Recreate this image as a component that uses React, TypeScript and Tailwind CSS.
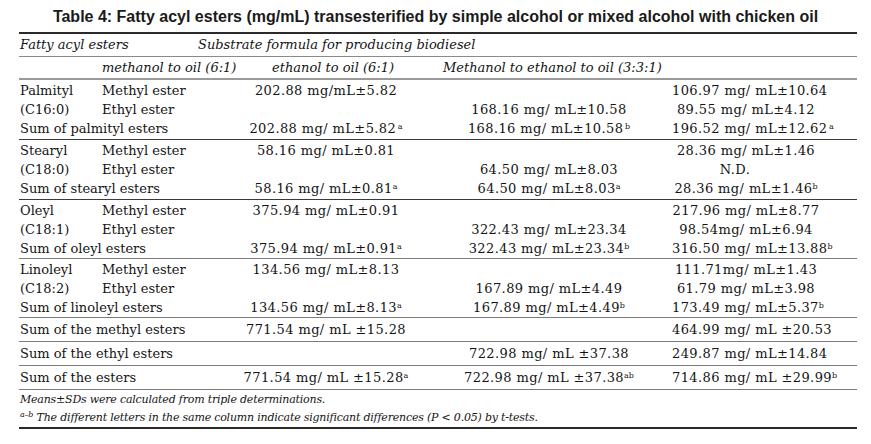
import React from 'react';

type Cell = { v: string; s?: string; gap?: boolean; cls?: string };

const GROUPS: {
  name: string;
  code: string;
  methyl: Cell[];
  ethyl: Cell[];
  sum: Cell[];
  line: string;
  pad: string;
}[] = [
  {
    name: 'Palmityl',
    code: '(C16:0)',
    methyl: [{ v: '202.88 mg/mL±5.82' }, { v: '' }, { v: '106.97 mg/ mL±10.64' }],
    ethyl: [{ v: '' }, { v: '168.16 mg/ mL±10.58' }, { v: '89.55 mg/ mL±4.12' }],
    sum: [
      { v: '202.88 mg/ mL±5.82', s: 'a', gap: true },
      { v: '168.16 mg/ mL±10.58', s: 'b', gap: true },
      { v: '196.52 mg/ mL±12.62', s: 'a', gap: true },
    ],
    line: 'bg-[#3a3a3a]',
    pad: 'pt-px pb-px',
  },
  {
    name: 'Stearyl',
    code: '(C18:0)',
    methyl: [{ v: '58.16 mg/ mL±0.81' }, { v: '' }, { v: '28.36 mg/ mL±1.46' }],
    ethyl: [{ v: '' }, { v: '64.50 mg/ mL±8.03' }, { v: 'N.D.', cls: 'pr-[22px]' }],
    sum: [
      { v: '58.16 mg/ mL±0.81', s: 'a' },
      { v: '64.50 mg/ mL±8.03', s: 'a' },
      { v: '28.36 mg/ mL±1.46', s: 'b' },
    ],
    line: 'bg-[#3a3a3a]',
    pad: 'pt-px pb-px',
  },
  {
    name: 'Oleyl',
    code: '(C18:1)',
    methyl: [{ v: '375.94 mg/ mL±0.91' }, { v: '' }, { v: '217.96 mg/ mL±8.77' }],
    ethyl: [{ v: '' }, { v: '322.43 mg/ mL±23.34' }, { v: '98.54mg/ mL±6.94' }],
    sum: [
      { v: '375.94 mg/ mL±0.91', s: 'a' },
      { v: '322.43 mg/ mL±23.34', s: 'b' },
      { v: '316.50 mg/ mL±13.88', s: 'b' },
    ],
    line: 'bg-[#7a7a7a]',
    pad: 'pt-px',
  },
  {
    name: 'Linoleyl',
    code: '(C18:2)',
    methyl: [{ v: '134.56 mg/ mL±8.13' }, { v: '' }, { v: '111.71mg/ mL±1.43' }],
    ethyl: [{ v: '' }, { v: '167.89 mg/ mL±4.49' }, { v: '61.79 mg/ mL±3.98' }],
    sum: [
      { v: '134.56 mg/ mL±8.13', s: 'a' },
      { v: '167.89 mg/ mL±4.49', s: 'b' },
      { v: '173.49 mg/ mL±5.37', s: 'b' },
    ],
    line: 'bg-[#7a7a7a]',
    pad: 'pt-px',
  },
];

const TOTALS: { label: string; cells: Cell[] }[] = [
  {
    label: 'Sum of the methyl esters',
    cells: [{ v: '771.54 mg/ mL ±15.28' }, { v: '' }, { v: '464.99 mg/ mL ±20.53' }],
  },
  {
    label: 'Sum of the ethyl esters',
    cells: [{ v: '' }, { v: '722.98 mg/ mL ±37.38' }, { v: '249.87 mg/ mL±14.84' }],
  },
  {
    label: 'Sum of the esters',
    cells: [
      { v: '771.54 mg/ mL ±15.28', s: 'a' },
      { v: '722.98 mg/ mL ±37.38', s: 'ab' },
      { v: '714.86 mg/ mL ±29.99', s: 'b' },
    ],
  },
];

const Value: React.FC<{ cell: Cell }> = ({ cell }) => (
  <div className={`text-center whitespace-nowrap tracking-[0.4px] ${cell.cls ?? ''}`}>
    {cell.v}
    {cell.s && (
      <sup className="text-[8px] tracking-normal">
        {cell.gap ? '\u2009' : ''}
        {cell.s}
      </sup>
    )}
  </div>
);

const Row: React.FC<{ children: React.ReactNode; h?: string }> = ({ children, h = 'h-[19px]' }) => (
  <div className={`grid grid-cols-[83px_124px_200px_246px_148px] items-center ${h}`}>{children}</div>
);

export default function App() {
  return (
    <div className="w-[871px] h-[444px] bg-white text-[#141414] font-['DejaVu_Serif',serif] text-[13px] overflow-hidden">
      {/* Title */}
      <div className="h-[32px] flex items-center justify-center pt-[2px] font-['Liberation_Sans',Arial,sans-serif] font-bold text-[16px] text-[#1a1a1a]">
        Table 4: Fatty acyl esters (mg/mL) transesterified by simple alcohol or mixed alcohol with chicken oil
      </div>

      <div className="ml-[19px] w-[838px]">
        <div className="h-[2px] bg-[#2a2a2a]" />

        {/* Header rows */}
        <div className="flex items-center h-[22px] italic">
          <div className="w-[179px] pl-[1px]">Fatty acyl esters</div>
          <div>Substrate formula for producing biodiesel</div>
        </div>
        <div className="h-px bg-[#8a8a8a]" />
        <div className="flex items-center h-[21px] italic">
          <div className="w-[253px] pl-[83px]">methanol to oil (6:1)</div>
          <div className="w-[171px]">ethanol to oil (6:1)</div>
          <div>Methanol to ethanol to oil (3:3:1)</div>
        </div>
        <div className="h-[2px] bg-[#9a9a9a]" />

        {/* Fatty acid groups */}
        {GROUPS.map((g) => (
          <div key={g.name}>
            <div className={g.pad}>
              <Row>
                <div className="pl-[1px]">{g.name}</div>
                <div>Methyl ester</div>
                {g.methyl.map((c, i) => (
                  <Value key={i} cell={c} />
                ))}
              </Row>
              <Row>
                <div className="pl-[1px]">{g.code}</div>
                <div>Ethyl ester</div>
                {g.ethyl.map((c, i) => (
                  <Value key={i} cell={c} />
                ))}
              </Row>
              <Row>
                <div className="col-span-2 pl-[1px]">Sum of {g.name.toLowerCase()} esters</div>
                {g.sum.map((c, i) => (
                  <Value key={i} cell={c} />
                ))}
              </Row>
            </div>
            <div className={`h-px ${g.line}`} />
          </div>
        ))}

        {/* Totals */}
        {TOTALS.map((t) => (
          <div key={t.label}>
            <Row h="h-[23px]">
              <div className="col-span-2 pl-[1px]">{t.label}</div>
              {t.cells.map((c, i) => (
                <Value key={i} cell={c} />
              ))}
            </Row>
            <div className="h-px bg-[#7a7a7a]" />
          </div>
        ))}

        {/* Footnotes */}
        <div className="pt-px italic text-[11px] tracking-[-0.2px] leading-[18px]">
          <div className="pl-[1px]">Means±SDs were calculated from triple determinations.</div>
          <div className="pl-[1px]">
            <sup className="text-[8px]">a–b</sup> The different letters in the same column indicate significant differences (P &lt; 0.05) by t-tests.
          </div>
        </div>
        <div className="h-[2px] bg-[#2a2a2a]" />
      </div>
    </div>
  );
}
